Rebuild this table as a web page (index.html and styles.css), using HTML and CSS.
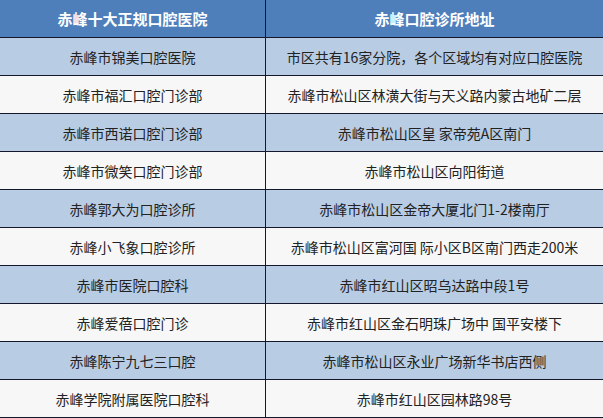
FILE: index.html
```html
<!DOCTYPE html>
<html lang="zh">
<head>
<meta charset="utf-8">
<link rel="stylesheet" href="styles.css">
</head>
<body>
<div class="table">
  <div class="row head"><div class="cell c1">赤峰十大正规口腔医院</div><div class="cell">赤峰口腔诊所地址</div></div>
  <div class="row band"><div class="cell c1">赤峰市锦美口腔医院</div><div class="cell">市区共有16家分院，各个区域均有对应口腔医院</div></div>
  <div class="row"><div class="cell c1">赤峰市福汇口腔门诊部</div><div class="cell">赤峰市松山区林潢大街与天义路内蒙古地矿二层</div></div>
  <div class="row band"><div class="cell c1">赤峰市西诺口腔门诊部</div><div class="cell">赤峰市松山区皇 家帝苑A区南门</div></div>
  <div class="row"><div class="cell c1">赤峰市微笑口腔门诊部</div><div class="cell">赤峰市松山区向阳街道</div></div>
  <div class="row band"><div class="cell c1">赤峰郭大为口腔诊所</div><div class="cell">赤峰市松山区金帝大厦北门1-2楼南厅</div></div>
  <div class="row"><div class="cell c1">赤峰小飞象口腔诊所</div><div class="cell">赤峰市松山区富河国 际小区B区南门西走200米</div></div>
  <div class="row band"><div class="cell c1">赤峰市医院口腔科</div><div class="cell">赤峰市红山区昭乌达路中段1号</div></div>
  <div class="row"><div class="cell c1">赤峰爱蓓口腔门诊</div><div class="cell">赤峰市红山区金石明珠广场中 国平安楼下</div></div>
  <div class="row band"><div class="cell c1">赤峰陈宁九七三口腔</div><div class="cell">赤峰市松山区永业广场新华书店西侧</div></div>
  <div class="row"><div class="cell c1">赤峰学院附属医院口腔科</div><div class="cell">赤峰市红山区园林路98号</div></div>
</div>
</body>
</html>
```

FILE: styles.css
```css
* { box-sizing: border-box; }
html, body { margin: 0; padding: 0; background: #f7f7f7; }
body { width: 603px; height: 418px; overflow: hidden; }
.table {
  display: flex;
  flex-direction: column;
  width: 603px;
  font-family: "Noto Sans CJK SC", "Noto Sans", sans-serif;
  font-size: 14px;
  color: #222222;
}
.row {
  display: grid;
  grid-template-columns: 266px 1fr;
  height: 38px;
  border-bottom: 1px solid #15182a;
  background: #f7f7f7;
}
.row.band { background: #b8cce4; }
.row.head {
  background: #4f7fbb;
  color: #ffffff;
  font-weight: bold;
  font-size: 15px;
}
.cell {
  display: flex;
  align-items: center;
  justify-content: center;
  white-space: nowrap;
  line-height: 1;
}
.c1 { border-right: 1px solid #15182a; }
```
